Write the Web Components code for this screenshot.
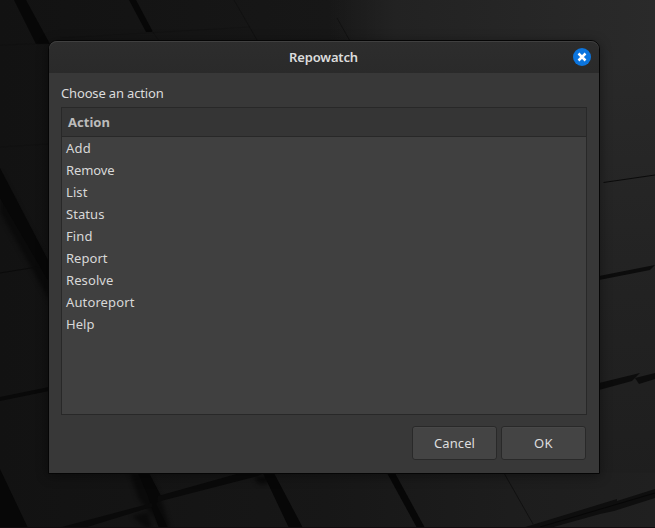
<!DOCTYPE html>
<html lang="en">
<head>
<meta charset="utf-8">
<title>Repowatch</title>
<style>
html,body{margin:0;height:100%;overflow:hidden;background:#171717}
body{font:13px/22px "Noto Sans","Open Sans",sans-serif;color:#dadada}
</style>
</head>
<body>
<desk-top>
  <app-dialog>
    <fit-text slot="title" width="69">Repowatch</fit-text>
    <fit-text slot="prompt" width="102.5">Choose an action</fit-text>
    <choice-list>
      <fit-text slot="head" width="42">Action</fit-text>
      <list-row><fit-text width="25">Add</fit-text></list-row>
      <list-row><fit-text width="48.5">Remove</fit-text></list-row>
      <list-row><fit-text width="21.5">List</fit-text></list-row>
      <list-row><fit-text width="38.5">Status</fit-text></list-row>
      <list-row><fit-text width="26.5">Find</fit-text></list-row>
      <list-row><fit-text width="41.5">Report</fit-text></list-row>
      <list-row><fit-text width="47.5">Resolve</fit-text></list-row>
      <list-row><fit-text width="68.5">Autoreport</fit-text></list-row>
      <list-row><fit-text width="28.5">Help</fit-text></list-row>
    </choice-list>
    <push-button slot="actions"><fit-text width="41">Cancel</fit-text></push-button>
    <push-button slot="actions"><fit-text width="19">OK</fit-text></push-button>
  </app-dialog>
</desk-top>
<script>
function define(name, html, setup) {
  customElements.define(name, class extends HTMLElement {
    connectedCallback() {
      if (this.shadowRoot) return;
      this.attachShadow({mode: 'open'}).innerHTML = html;
      if (setup) setup(this);
    }
  });
}

define('desk-top', `
<style>
:host{display:grid;grid-template:528px / 655px}
svg,.stage{grid-area:1/1;display:block}
.stage{display:flex;align-items:flex-start;padding:40px 0 0 48px}
</style>
<svg width="655" height="528" viewBox="0 0 655 528" aria-hidden="true">
  <defs>
    <linearGradient id="base" x1="0" y1="0" x2="1" y2="0"><stop offset="0" stop-color="#121212"/><stop offset=".5" stop-color="#171717"/><stop offset=".78" stop-color="#1d1d1d"/><stop offset="1" stop-color="#202020"/></linearGradient>
    <linearGradient id="tr" x1="330" y1="0" x2="655" y2="0" gradientUnits="userSpaceOnUse"><stop offset="0" stop-color="#222" stop-opacity="0"/><stop offset=".2" stop-color="#222"/><stop offset="1" stop-color="#2a2a2a"/></linearGradient>
    <linearGradient id="right" x1="0" y1="60" x2="0" y2="528" gradientUnits="userSpaceOnUse"><stop offset="0" stop-color="#292929"/><stop offset=".5" stop-color="#222"/><stop offset="1" stop-color="#1d1d1d"/></linearGradient>
    <filter id="soft" x="-10%" y="-10%" width="120%" height="120%" color-interpolation-filters="sRGB"><feGaussianBlur stdDeviation=".6"/></filter>
    <filter id="softer" x="-10%" y="-10%" width="120%" height="120%" color-interpolation-filters="sRGB"><feGaussianBlur stdDeviation="2"/></filter>
  </defs>
  <rect width="655" height="528" fill="url(#base)"/>
  <rect x="330" width="325" height="60" fill="url(#tr)"/>
  <rect x="590" y="60" width="65" height="413" fill="url(#right)"/>
  <g fill="#0a0a0a" filter="url(#softer)">
    <path d="M0 172 50 266V302L0 212z"/>
    <path d="M130 473H148L160 496 170 528H162L148 510 138 498z"/>
    <path d="M132 516 148 512 152 528H146z"/>
    <path d="M254 476H270L268 484H258z"/>
  </g>
  <g fill="#070707" filter="url(#soft)">
    <path d="M14 0H26L50 44H36z"/>
    <path d="M129 0H136L153 32H146z"/>
    <path d="M0 168 50 264V284L28 246 0 198z"/>
    <path d="M0 469 28 528H0z"/>
    <path d="M138 473H149L161 496 156 504 168 528H159L151 506 148 496z"/>
    <path d="M263 473H274L303 528H289z"/>
    <path d="M387 473H395L425 528H417z"/>
    <path d="M158 496 240 473H264L258 476 157 502z" fill="#0a0a0a"/>
    <path d="M58 528 152 503V507L84 528z" fill="#0a0a0a"/>
    <path d="M0 397 49 387V391L0 401z" fill="#090909"/>
    <path d="M599 276 655 265 650 270 599 280z" fill="#0c0c0c"/>
    <path d="M599 383 640 373 632 381 599 390z" fill="#0c0c0c"/>
    <path d="M635 378 655 373V379L639 384z" fill="#0c0c0c"/>
    <path d="M522 528 617 499V501L655 489V498L614 511 600 514 550 528z" fill="#0e0e0e"/>
  </g>
  <g fill="none" stroke="#0b0b0b" stroke-width="1">
    <path d="M603.500 182.500 655 175"/>
    <path d="M0 273 40 266.500"/>
    <path d="M152 31 160 42M234 0 257 40M337 18 350 41M504 473 533 524" stroke="#111"/>
    <path d="M0 45 48 43.500M0 147 48 144M60 38 250 27" stroke="#101010" opacity=".4"/>
    <path d="M540 527 655 493" stroke="#070707"/>
  </g>
  <rect y="527" width="655" height="1" fill="#110b0e"/>
</svg>
<div class="stage"><slot></slot></div>`);

define('app-dialog', `
<style>
:host{display:grid;box-sizing:border-box;width:552px;height:434px;grid-template-rows:32px 1fr;background:#383838;
 border:1px solid #050505;border-radius:9px 9px 0 0;overflow:hidden;box-shadow:0 2px 12px rgba(0,0,0,.4)}
header{display:grid;grid-template-columns:34px 1fr 34px;align-items:center;background:linear-gradient(#2d2d2d,#2a2a2a);
 box-shadow:inset 0 1px #404040;border-radius:8px 8px 0 0;font-weight:600;color:#dcdcdc}
.title{grid-column:2;display:flex;justify-content:center;padding:0 1px 1px 0}
button{all:unset;display:block;width:18px;height:18px;margin-left:8px}
button svg{display:block}
main{display:grid;grid-template-rows:22px 308px 34px;padding:12px 12px 13px;color:#dcdcdc}
.prompt{margin-top:-3px}
.list{display:grid}
footer{display:flex;justify-content:flex-end;gap:4px;padding-right:1px;margin-top:11px;height:34px}
</style>
<header><div class="title"><slot name="title"></slot></div>
<button aria-label="Close"><svg width="18" height="18" viewBox="0 0 18 18"><circle cx="9" cy="9" r="9" fill="#0c75de"/><path d="M5.500 5.500l7 7M12.500 5.500l-7 7" stroke="#fff" stroke-width="2.500"/></svg></button></header>
<main><div class="prompt"><slot name="prompt"></slot></div><div class="list"><slot></slot></div><footer><slot name="actions"></slot></footer></main>`);

define('choice-list', `
<style>
:host{display:block;box-sizing:border-box;height:308px;border:1px solid #282828;background:#404040;color:#d8d8d8}
.head{box-sizing:border-box;height:29px;padding:3px 6px 0;border-bottom:1px solid #282828;background:#353535;color:#bcbcbc;font-weight:700}
</style>
<div class="head"><slot name="head"></slot></div><slot></slot>`);

define('list-row', `<style>:host{display:block;height:22px;padding-left:4px}</style><slot></slot>`);

define('push-button', `
<style>
:host{display:flex;box-sizing:border-box;width:85px;height:34px;align-items:center;justify-content:center;
 border:1px solid #292929;border-radius:3px;background:#444;box-shadow:inset 0 1px #484848;color:#dedede}
</style><slot></slot>`);

/* Label that spreads its tracking so the word fills the given width. */
define('fit-text', `
<style>:host{display:inline-block;white-space:nowrap;vertical-align:top}span{display:inline-block}</style><span><slot></slot></span>`,
el => {
  const span = el.shadowRoot.querySelector('span');
  requestAnimationFrame(() => {
    const want = parseFloat(el.getAttribute('width'));
    const n = el.textContent.length;
    const gap = (want - span.getBoundingClientRect().width) / n;
    span.style.letterSpacing = gap.toFixed(3) + 'px';
  });
});
</script>
</body>
</html>
